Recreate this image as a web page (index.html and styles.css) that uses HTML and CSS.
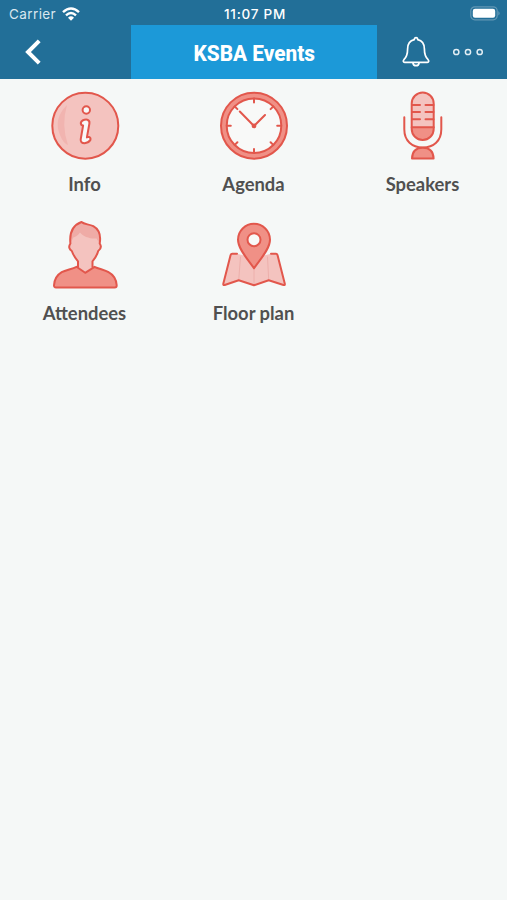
FILE: index.html
```html
<!DOCTYPE html>
<html lang="en">
<head>
  <meta charset="utf-8" />
  <title>KSBA Events</title>
  <meta name="viewport" content="width=device-width, initial-scale=1" />
  <link rel="stylesheet" href="styles.css">
</head>
<body>
  <header class="topbar">
    <!-- Status bar -->
    <div class="status">
      <div class="carrier">
        <span>Carrier</span>
        <svg class="wifi" width="18" height="14" viewBox="0 0 18 14" fill="none" stroke="#fff" stroke-width="2.4">
          <path d="M1 5.2Q9-2.4 17 5.2"/>
          <path d="M4 8.4Q9 3.8 14 8.4"/>
          <path d="M6 10.7Q9 8 12 10.7L9 13.8Z" fill="#fff" stroke="none"/>
        </svg>
      </div>
      <span class="clock">11:07 PM</span>
      <svg class="battery" width="31" height="15" viewBox="0 0 31 15">
        <rect x=".8" y=".8" width="26.4" height="13" rx="4" fill="none" stroke="#6297b4" stroke-width="1.2"/>
        <rect x="2.8" y="2.8" width="22.4" height="9" rx="2.2" fill="#fff"/>
        <path d="M28.5 5q2 2.3 0 4.6z" fill="#7ba9c2"/>
      </svg>
    </div>

    <!-- Nav bar -->
    <nav class="navbar">
      <a class="back" href="#" aria-label="Back">
        <svg width="18" height="26" viewBox="0 0 18 26" fill="none" stroke="#fff" stroke-width="4"><path d="M15.2 1.8L4 13l11.2 11.2"/></svg>
      </a>
      <h1 class="title"><span>KSBA Events</span></h1>
      <div class="actions">
        <svg width="28" height="32" viewBox="0 0 28 32" fill="none" stroke="#fff" stroke-width="1.7" stroke-linejoin="round">
          <path d="M12.3 3.7C7.5 4.8 5.6 8.5 5.6 13C5.6 18.5 4.5 21.2 1.9 23.7C.8 25 1.3 26.4 2.6 26.4H25.4C26.7 26.4 27.2 25 26.1 23.7C23.5 21.2 22.4 18.5 22.4 13C22.4 8.5 20.5 4.8 15.7 3.7C15.7 .9 12.3 .9 12.3 3.7Z"/>
          <path d="M10.9 26.6Q11.2 29.7 14 29.7Q16.8 29.7 17.1 26.6"/>
        </svg>
        <svg width="32" height="10" viewBox="0 0 32 10" fill="none" stroke="#e3eef4" stroke-width="1.5">
          <circle cx="4.3" cy="5" r="2.6"/>
          <circle cx="16" cy="5" r="2.6"/>
          <circle cx="27.7" cy="5" r="2.6"/>
        </svg>
      </div>
    </nav>
  </header>

  <main class="menu">
    <a class="item" href="#">
      <svg class="icon" viewBox="0 0 73 73">
        <circle class="light" cx="37.3" cy="35.7" r="33"/>
        <path class="glare" d="M19 15Q5 29 12 45Q15 53 20 55Q13 35 19 15Z"/>
        <circle class="hole" cx="38.3" cy="20" r="3.7"/>
        <path class="hole" d="M34.5 30.5Q37 29.3 39.3 29.7Q41.9 30.4 41.4 33.5L38.9 47.4L41 46.9Q43.1 47.7 42.3 50.2Q40.3 53 36.6 53.2Q32.4 53.2 32.7 49.3L35.1 35.5L33.4 35Q31.8 32.6 34.5 30.5Z"/>
      </svg>
      <span>Info</span>
    </a>

    <a class="item" href="#">
      <svg class="icon" viewBox="0 0 73 73">
        <circle class="ring" cx="37" cy="35.7" r="33"/>
        <circle class="face" cx="37" cy="35.7" r="27.3"/>
        <path class="line" d="M37 8.5v4M37 58.9v4M9.8 35.7h4M60.2 35.7h4M17.8 16.5l2.6 2.6M53.6 52.3l2.6 2.6M56.2 16.5l-2.6 2.6M20.4 52.3l-2.6 2.6"/>
        <path class="line" d="M22.8 21.5L37 36L48 25"/>
        <circle class="dot" cx="37" cy="35.9" r="2.4"/>
      </svg>
      <span>Agenda</span>
    </a>

    <a class="item" href="#">
      <svg class="icon" viewBox="0 0 73 73">
        <rect class="fill-light" x="25.7" y="2.6" width="22" height="47.4" rx="11"/>
        <path class="fill-dark" d="M25.7 37.3h22V39a11 11 0 0 1-22 0z"/>
        <rect class="line" x="25.7" y="2.6" width="22" height="47.4" rx="11"/>
        <path class="line" d="M25.7 37.3h22M26 15h8M39.5 15h8M26 21.9h8M39.5 21.9h8M26 29.2h8M39.5 29.2h8"/>
        <path class="line" d="M18.3 27.2V39.3C18.3 51 26 57.5 36.8 57.5S55.3 51 55.3 39.3V27.2"/>
        <path class="dark" d="M26 68.6C26.2 61.8 30 57.8 36.8 57.8S47.4 61.8 47.6 68.6Z"/>
      </svg>
      <span>Speakers</span>
    </a>

    <a class="item" href="#">
      <svg class="icon" viewBox="0 0 73 73">
        <path class="fill-light" d="M22.4 24.5C21.3 14 24 6.5 33.5 3C36 5.5 41 5 45.3 7.2C52 11 53 17 51.7 24.5C54 28 52.3 30.5 50.2 32C49 36.5 46.5 40 44.5 42.3V47.7L37 54L30 47.7V42.3C27.5 39.5 25.5 36.5 23.8 32C21.6 30.5 20 28 22.4 24.5Z"/>
        <path class="shade" d="M22.4 24.5C21.3 14 24 6.5 33.5 3C36 5.5 41 5 45.3 7.2C52 11 53 17 51.7 24.5L48.5 19.5C42 20 35 17.5 32 13.5C30 16.5 27 18 25.3 18.5Z"/>
        <path class="line" d="M30 48V42.3C27.5 39.5 25.5 36.5 23.8 32C21.6 30.5 20 28 22.4 24.5C21.3 14 24 6.5 33.5 3C36 5.5 41 5 45.3 7.2C52 11 53 17 51.7 24.5C54 28 52.3 30.5 50.2 32C49 36.5 46.5 40 44.5 42.3V48"/>
        <path class="dark" d="M28.5 47.8L37.2 53.8L46.5 47.8C51 50 57 51 60.5 53.2C66.5 56.5 68.4 62 68.7 66.3Q68.7 68.5 66.7 68.5H8Q5.9 68.5 6 66.3C6.3 61 8.3 56.5 13.7 53.2C18 51 24 50 28.5 47.8Z"/>
      </svg>
      <span>Attendees</span>
    </a>

    <a class="item" href="#">
      <svg class="icon" viewBox="0 0 73 73">
        <path class="fill-light" d="M20 34.8H14L6.5 66L21.7 61.3L37 66L51.7 61.3L67.7 66L60 34.8H54L37 39Z"/>
        <path class="fold" d="M23.5 38L21.7 61.3M37 49V66M50.5 38L51.7 61.3"/>
        <path class="line" d="M20 34.8H15.2Q14 34.8 13.6 36L6.3 64.8Q6 66.5 7.7 66L21.7 61.3L37 66.2L51.7 61.3L66.5 66Q68.2 66.5 67.8 64.8L60.5 36Q60.1 34.8 59 34.8H54"/>
        <path class="dark" d="M37 49.3C32 41.5 21 30.5 21 20.8A16 16 0 0 1 53 20.8C53 30.5 42 41.5 37 49.3Z"/>
        <circle class="hole" cx="37" cy="20.7" r="6.5"/>
      </svg>
      <span>Floor plan</span>
    </a>
  </main>
</body>
</html>
```
FILE: styles.css
```css
:root {
  --bar:#226f98;
  --blue:#1c99d8;
  --bg:#f5f8f7;
  --text:#505050;
  --red:#e2574c;
  --pink:#f4c3bf;
  --salmon:#f09086;
}

*{box-sizing:border-box;margin:0;padding:0}
body{background:var(--bg);color:var(--text);min-height:100vh;font-family:Lato,Arial,sans-serif}
svg{display:block}

/* Top bar */
.topbar{height:79px;background:var(--bar);color:#fff}
.status{
  display:grid;grid-template-columns:1fr auto 1fr;align-items:center;
  height:25px;padding:2px 6px 0 9px;
  font-family:Inter,Arial,sans-serif;font-size:13px;
}
.carrier{display:flex;align-items:center;gap:6px;font-size:13.5px;letter-spacing:.4px;color:#d9e7ef}
.clock{font-weight:500;font-size:13.5px;letter-spacing:.75px}
.battery{justify-self:end}

.navbar{display:grid;grid-template-columns:131px 246px 130px;height:54px}
.back{display:flex;align-items:center;padding-left:24px}
.title{
  display:flex;align-items:center;justify-content:center;
  background:var(--blue);
  font-family:Roboto,Arial,sans-serif;font-size:22px;font-weight:800;
}
.title span{padding-top:2px;transform:scaleX(.945)}
.actions{display:flex;align-items:center;gap:22px;padding-left:25px}

/* Menu grid */
.menu{display:grid;grid-template-columns:repeat(3,1fr);grid-auto-rows:129px;padding-top:11px}
.item{display:flex;flex-direction:column;align-items:center;color:var(--text);text-decoration:none}
.item span{margin-top:9px;font-size:18.4px;line-height:24px;font-weight:700}

/* Icons */
.icon{width:73px;height:73px;fill:none;stroke-width:2;stroke-linecap:round;stroke-linejoin:round}
.line{stroke:var(--red)}
.light{fill:var(--pink);stroke:var(--red)}
.dark{fill:var(--salmon);stroke:var(--red)}
.ring{fill:var(--salmon);stroke:var(--red)}
.face,.hole{fill:#f8f9f8;stroke:var(--red)}
.fill-light{fill:var(--pink)}
.fill-dark{fill:var(--salmon)}
.shade{fill:#efaba6}
.glare{fill:#f1b4b0}
.fold{stroke:#edb0ac;stroke-width:1}
.dot{fill:var(--red)}
```
